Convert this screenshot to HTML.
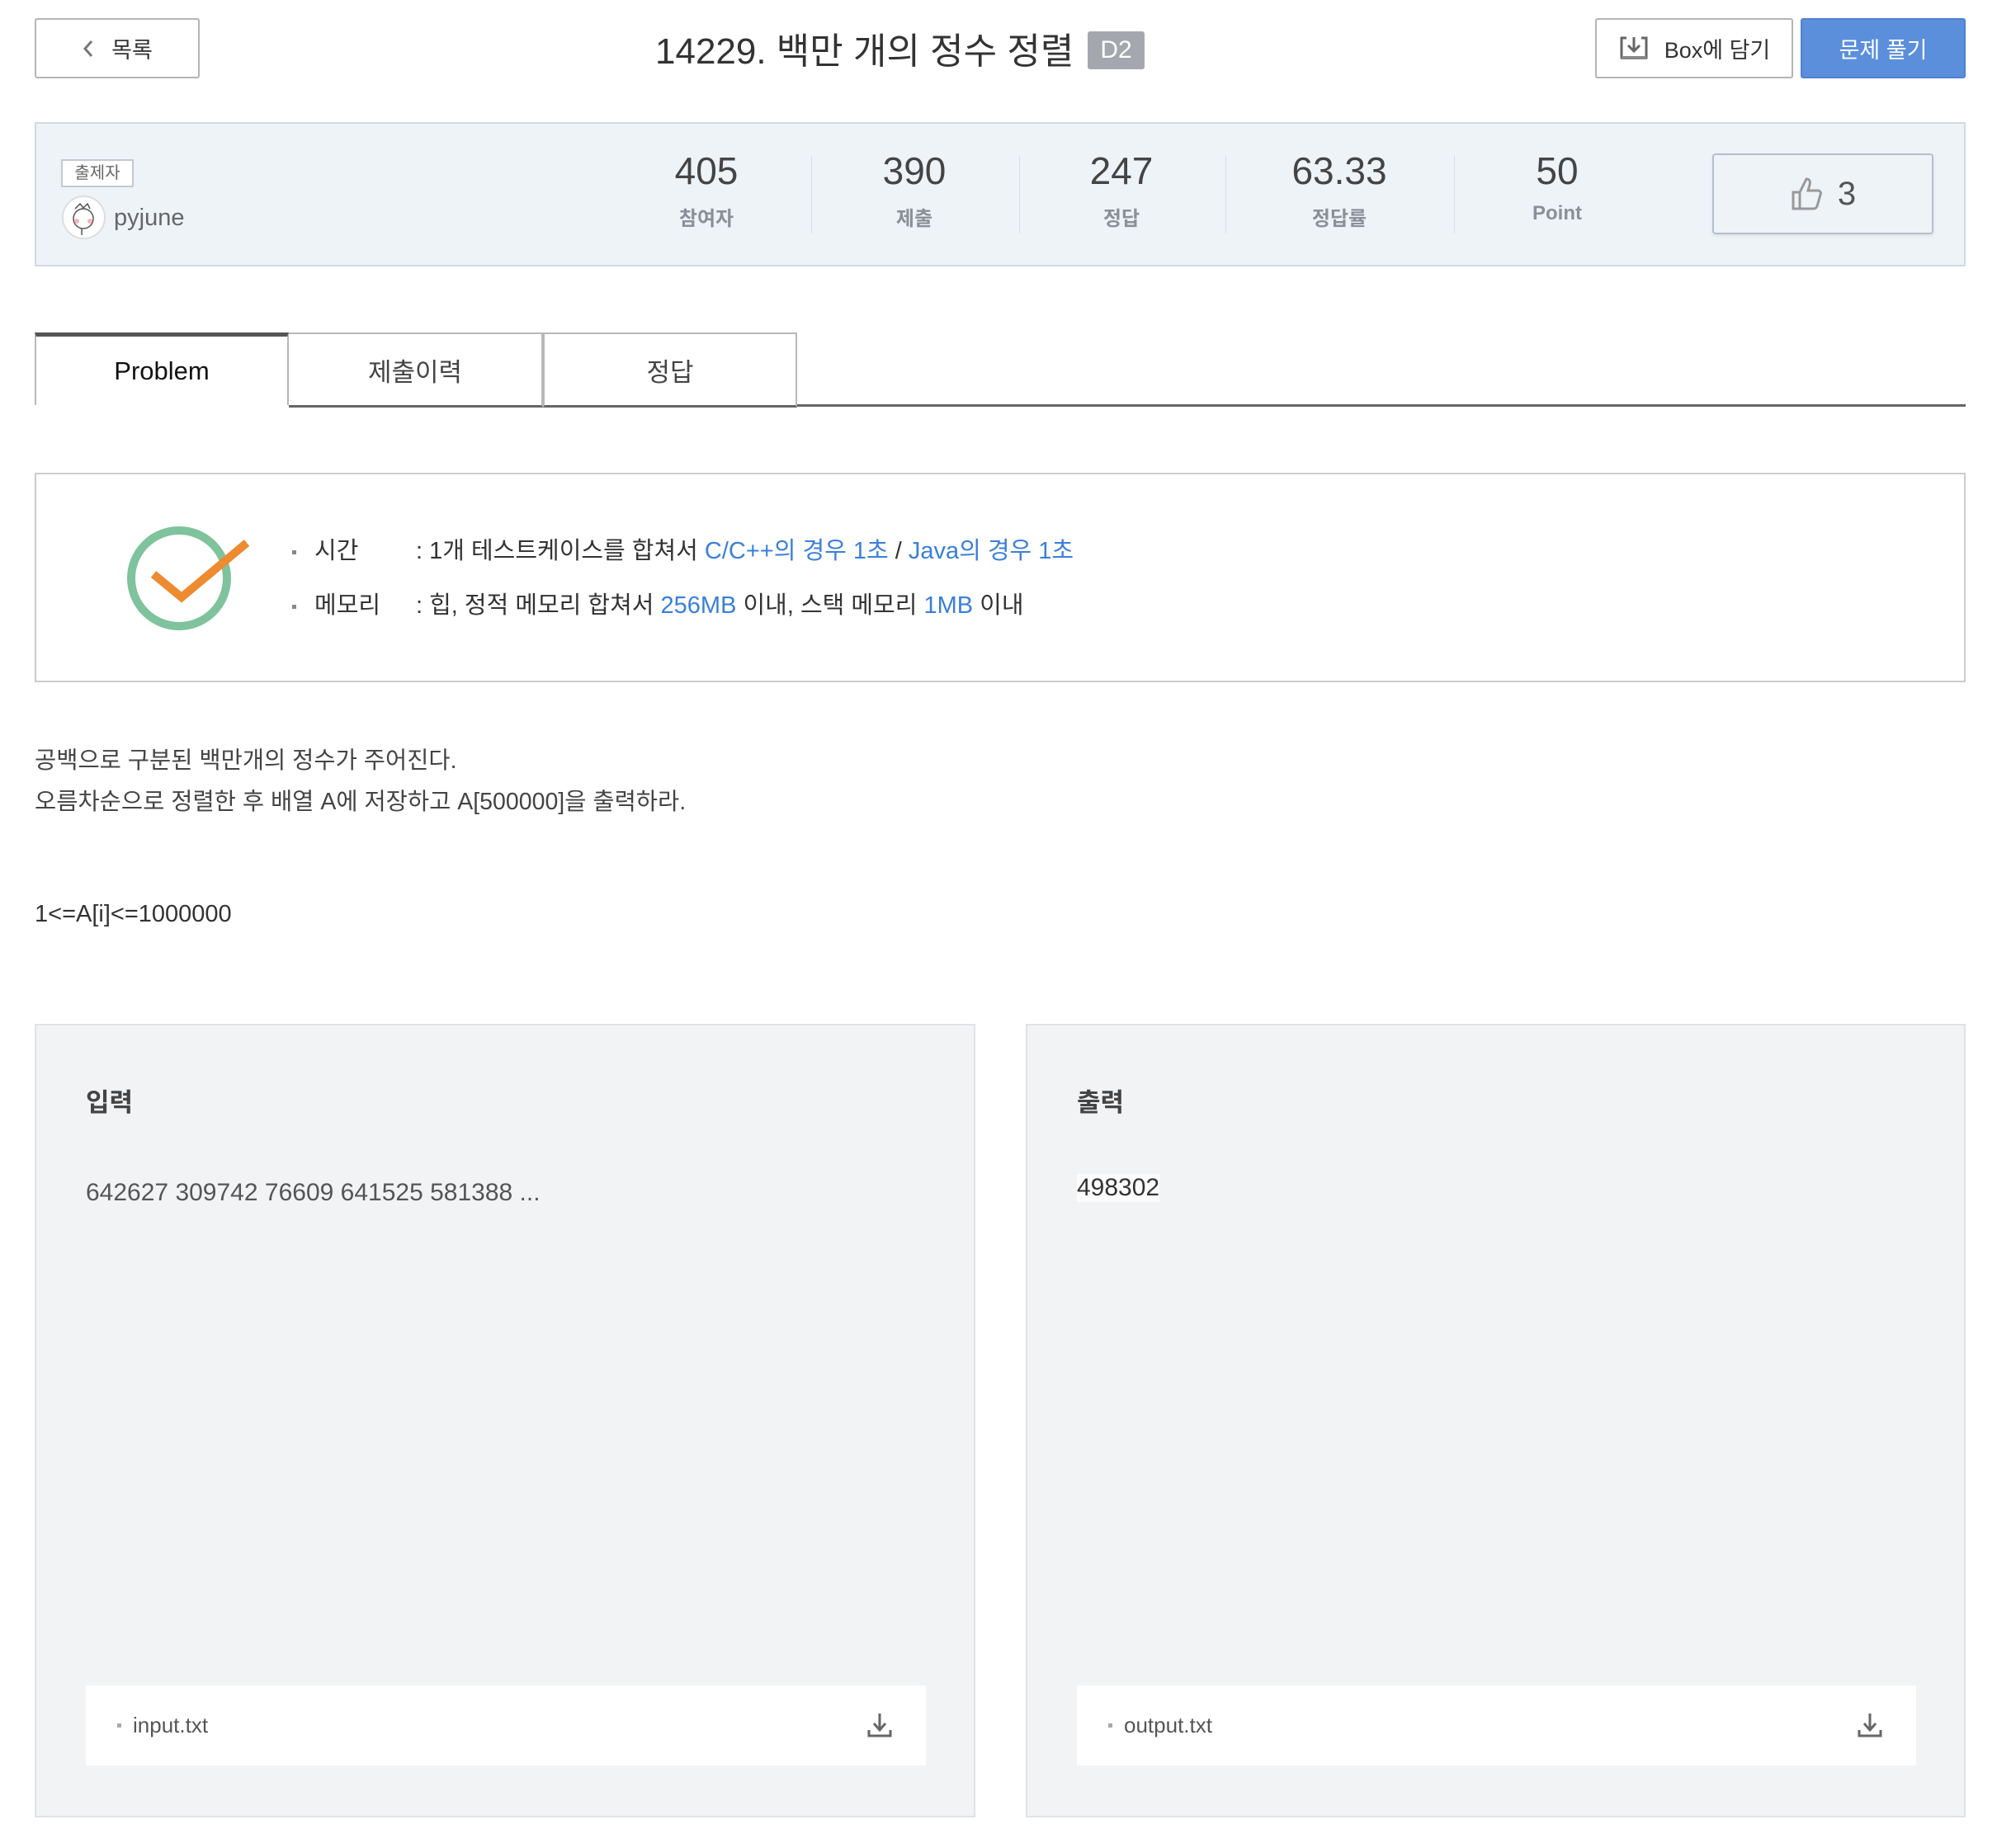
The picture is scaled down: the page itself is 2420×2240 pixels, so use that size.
<!DOCTYPE html>
<html><head><meta charset="utf-8">
<style>
*{margin:0;padding:0;box-sizing:border-box}
body{width:2420px;height:2240px;background:#fff;position:relative;overflow:hidden;font-family:"Liberation Sans","Noto Sans CJK KR",sans-serif;color:#333}
.a{position:absolute}
.btn{position:absolute;border:2px solid #b5b5b5;border-radius:3px;background:#fff;display:flex;align-items:center;justify-content:center;font-size:27px;color:#333}
.num{position:absolute;width:240px;text-align:center;font-size:46px;color:#444;top:180px}
.lbl{position:absolute;width:240px;text-align:center;font-size:24px;color:#8b8f99;font-weight:bold;top:245px}
.div{position:absolute;top:189px;width:1px;height:94px;background:#d6dde6}
.tab{position:absolute;top:403px;height:88px;width:308px;border:2px solid #b8b8b8;border-bottom:none;display:flex;align-items:center;justify-content:center;font-size:31px;color:#444;background:#fff}
.blue{color:#3b7fd9}
.panel{position:absolute;top:1241px;height:962px;background:#f2f3f5;border:2px solid #dfe3e6}
.file{position:absolute;left:60px;top:800px;height:97px;background:#fff;display:flex;align-items:center;font-size:26px;color:#555;padding-left:38px}
.dot{display:inline-block;width:5px;height:5px;background:#888;vertical-align:middle;margin-right:14px}
</style></head><body>
<div class="btn" style="left:42px;top:22px;width:200px;height:73px"><svg width="16" height="24" viewBox="0 0 16 24" style="margin-right:20px"><path d="M12 3L4 12l8 9" fill="none" stroke="#777" stroke-width="3"/></svg>목록</div>
<div class="a" style="left:794px;top:26px;font-size:44px;color:#333;white-space:nowrap">14229. 백만 개의 정수 정렬</div>
<div class="a" style="left:1318px;top:38px;width:69px;height:46px;background:#a4a8ae;color:#fff;font-size:30px;border-radius:3px;text-align:center;line-height:46px">D2</div>
<div class="btn" style="left:1933px;top:22px;width:240px;height:73px"><svg width="38" height="34" viewBox="0 0 38 34" style="margin-right:18px"><path d="M10 4H4v24h30V4h-6" fill="none" stroke="#666" stroke-width="3"/><path d="M19 3v16M12 13l7 7 7-7" fill="none" stroke="#666" stroke-width="3"/><rect x="4" y="26" width="30" height="4" fill="#888"/></svg>Box에 담기</div>
<div class="btn" style="left:2182px;top:22px;width:200px;height:73px;background:#5b8fdc;border-color:#4d82d2;color:#fff">문제 풀기</div>

<div class="a" style="left:42px;top:148px;width:2340px;height:175px;background:#eef3f8;border:2px solid #d0dae5"></div>
<div class="a" style="left:74px;top:193px;width:88px;height:34px;border:2px solid #c3c9d0;background:#fff;font-size:20px;color:#666;text-align:center;line-height:30px">출제자</div>
<div class="a" style="left:75px;top:237px;width:53px;height:53px;border-radius:50%;background:#fff;border:2px solid #ddd"><svg width="49" height="49" viewBox="0 0 49 49"><circle cx="24" cy="26" r="12" fill="none" stroke="#555" stroke-width="1.5"/><path d="M14 14l6-6 4 5 5-5 3 6" fill="none" stroke="#555" stroke-width="1.5"/><circle cx="16" cy="29" r="3" fill="#f4b4b8"/><circle cx="32" cy="29" r="3" fill="#f4b4b8"/><path d="M22 38v8" stroke="#555" stroke-width="1.5"/></svg></div>
<div class="a" style="left:138px;top:248px;font-size:29px;color:#666">pyjune</div>
<div class="num" style="left:736px">405</div><div class="lbl" style="left:736px">참여자</div>
<div class="div" style="left:983px"></div>
<div class="num" style="left:988px">390</div><div class="lbl" style="left:988px">제출</div>
<div class="div" style="left:1235px"></div>
<div class="num" style="left:1239px">247</div><div class="lbl" style="left:1239px">정답</div>
<div class="div" style="left:1485px"></div>
<div class="num" style="left:1503px">63.33</div><div class="lbl" style="left:1503px">정답률</div>
<div class="div" style="left:1762px"></div>
<div class="num" style="left:1767px">50</div><div class="lbl" style="left:1767px">Point</div>
<div class="a" style="left:2075px;top:186px;width:268px;height:98px;border:2px solid #b4bfcf;border-radius:4px;background:#eef3f8;box-shadow:0 2px 4px rgba(0,0,0,.08);display:flex;align-items:center;justify-content:center;font-size:40px;color:#555"><svg width="44" height="44" viewBox="0 0 44 44" style="margin-right:14px"><path d="M4 20h8v20H4zM12 20l8-16c4 0 5 3 4 7l-2 7h12c3 0 4 3 3 5l-4 14c-1 2-2 3-4 3H12" fill="none" stroke="#999" stroke-width="3"/></svg>3</div>

<div class="a" style="left:966px;top:490px;width:1416px;height:3px;background:#666"></div>
<div class="tab" style="left:42px;border-top:5px solid #555;color:#111">Problem</div>
<div class="tab" style="left:350px;border-left:none;border-bottom:3px solid #666;height:91px">제출이력</div>
<div class="tab" style="left:658px;border-bottom:3px solid #666;height:91px">정답</div>

<div class="a" style="left:42px;top:573px;width:2340px;height:254px;border:2px solid #ccc"></div>
<svg class="a" style="left:150px;top:632px" width="160" height="140" viewBox="0 0 160 140"><circle cx="67" cy="69" r="58" fill="none" stroke="#7fc39d" stroke-width="10"/><path d="M36 64l34 28 79-66" fill="none" stroke="#ee8a30" stroke-width="10"/></svg>
<div class="a" style="left:354px;top:648px;font-size:29px;color:#333;white-space:nowrap;line-height:40px">
<span class="dot"></span>&nbsp;시간<span style="position:absolute;left:150px">:&nbsp;1개 테스트케이스를 합쳐서 <span class="blue">C/C++의 경우 1초</span> / <span class="blue">Java의 경우 1초</span></span></div>
<div class="a" style="left:354px;top:714px;font-size:29px;color:#333;white-space:nowrap;line-height:40px">
<span class="dot"></span>&nbsp;메모리<span style="position:absolute;left:150px">:&nbsp;힙, 정적 메모리 합쳐서 <span class="blue">256MB</span> 이내, 스택 메모리 <span class="blue">1MB</span> 이내</span></div>

<div class="a" style="left:42px;top:897px;font-size:28.5px;color:#444;line-height:50px;white-space:nowrap">공백으로 구분된 백만개의 정수가 주어진다.<br>오름차순으로 정렬한 후 배열 A에 저장하고 A[500000]을 출력하라.</div>
<div class="a" style="left:42px;top:1092px;font-size:29px;color:#333">1&lt;=A[i]&lt;=1000000</div>

<div class="panel" style="left:42px;width:1140px">
<div class="a" style="left:60px;top:68px;font-size:31px;font-weight:bold;color:#444">입력</div>
<div class="a" style="left:60px;top:186px;font-size:30px;color:#555">642627 309742 76609 641525 581388 ...</div>
<div class="file" style="width:1018px"><span class="dot" style="background:#aaa"></span>input.txt<svg class="a" style="right:40px;top:32px" width="32" height="32" viewBox="0 0 32 32"><path d="M16 2v20M9 14l7 8 7-8" fill="none" stroke="#666" stroke-width="3"/><path d="M3 22v7h26v-7" fill="none" stroke="#666" stroke-width="3"/></svg></div>
</div>
<div class="panel" style="left:1243px;width:1139px">
<div class="a" style="left:60px;top:68px;font-size:31px;font-weight:bold;color:#444">출력</div>
<div class="a" style="left:60px;top:180px;font-size:30px;color:#333;background:#fcfcfc">498302</div>
<div class="file" style="width:1017px"><span class="dot" style="background:#aaa"></span>output.txt<svg class="a" style="right:40px;top:32px" width="32" height="32" viewBox="0 0 32 32"><path d="M16 2v20M9 14l7 8 7-8" fill="none" stroke="#666" stroke-width="3"/><path d="M3 22v7h26v-7" fill="none" stroke="#666" stroke-width="3"/></svg></div>
</div>
</body></html>
